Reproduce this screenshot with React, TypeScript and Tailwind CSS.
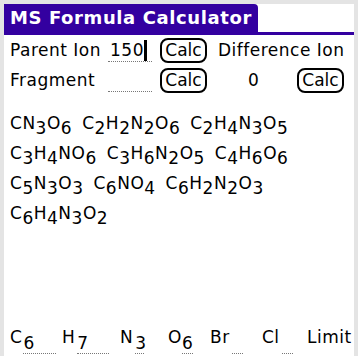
import React from "react";

const F = { fontFamily: '"DejaVu Sans", Verdana, sans-serif' };

function Formula({ parts }: { parts: [string, string?][] }) {
  return (
    <span className="whitespace-nowrap">
      {parts.map(([el, n], i) => (
        <React.Fragment key={i}>
          <span>{el}</span>
          {n ? <span className="relative top-[5px]">{n}</span> : null}
        </React.Fragment>
      ))}
    </span>
  );
}

function Calc() {
  return (
    <div className="h-[25px] w-[47px] rounded-[8px] border-2 border-black flex items-center justify-center text-[17px] leading-none tracking-normal">
      Calc
    </div>
  );
}

export default function App() {
  const lines: [string, string?][][][] = [
    [
      [["C"], ["N", "3"], ["O", "6"]],
      [["C", "2"], ["H", "2"], ["N", "2"], ["O", "6"]],
      [["C", "2"], ["H", "4"], ["N", "3"], ["O", "5"]],
    ],
    [
      [["C", "3"], ["H", "4"], ["N"], ["O", "6"]],
      [["C", "3"], ["H", "6"], ["N", "2"], ["O", "5"]],
      [["C", "4"], ["H", "6"], ["O", "6"]],
    ],
    [
      [["C", "5"], ["N", "3"], ["O", "3"]],
      [["C", "6"], ["N"], ["O", "4"]],
      [["C", "6"], ["H", "2"], ["N", "2"], ["O", "3"]],
    ],
    [[["C", "6"], ["H", "4"], ["N", "3"], ["O", "2"]]],
  ];
  const bottom: { l: string; n?: string; dw: number; w: number; dl: number }[] = [
    { l: "C", n: "6", dw: 33, w: 52, dl: 1 },
    { l: "H", n: "7", dw: 32, w: 58, dl: 2 },
    { l: "N", n: "3", dw: 9, w: 48, dl: 2 },
    { l: "O", n: "6", dw: 11, w: 42, dl: 0 },
    { l: "Br", dw: 11, w: 52, dl: 2 },
    { l: "Cl", dw: 11, w: 45, dl: 2 },
  ];
  return (
    <div className="w-[358px] h-[356px] bg-[#e4e4e4] pl-[4px] pt-[4px] pr-[4px] overflow-hidden" style={F}>
      <div className="w-[350px] h-[352px] bg-white flex flex-col text-black tracking-[0.5px]">
        <div className="flex flex-col">
          <div className="h-[28px] w-[254px] bg-[#3300a0] rounded-tr-[4px] flex items-center pl-[6px]">
            <span className="text-white text-[18px] font-bold leading-none tracking-[0.6px]">
              MS Formula Calculator
            </span>
          </div>
          <div className="h-[3px] w-full bg-[#3300a0]" />
        </div>

        <div className="flex items-center mt-[3px] h-[25px] text-[17px] leading-none">
          <span className="ml-[6px] w-[98px] whitespace-nowrap">Parent Ion</span>
          <span className="w-[44px] h-[22px] border-b border-dotted border-[#777] flex items-center">
            <span className="ml-[2px]">150</span>
            <span className="w-[3px] h-[21px] bg-black" />
          </span>
          <div className="ml-[8px]">
            <Calc />
          </div>
          <span className="ml-[11px] whitespace-nowrap">Difference Ion</span>
        </div>

        <div className="flex items-center mt-[5px] h-[25px] text-[17px] leading-none">
          <span className="ml-[6px] w-[98px]">Fragment</span>
          <span className="w-[44px] h-[22px] border-b border-dotted border-[#777]" />
          <div className="ml-[8px]">
            <Calc />
          </div>
          <span className="ml-[41px] w-[49px]">0</span>
          <Calc />
        </div>

        <div className="mt-[22px] ml-[6px] flex flex-col text-[17px] leading-none gap-[12px]">
          {lines.map((line, i) => (
            <div key={i} className="flex gap-[10px] h-[18px]">
              {line.map((f, j) => (
                <Formula key={j} parts={f} />
              ))}
            </div>
          ))}
        </div>

        <div className="mt-auto mb-[0px] ml-[6px] flex items-end text-[17px] leading-none h-[32px]">
          {bottom.map((b, i) => (
            <div key={i} className="flex items-end shrink-0" style={{ width: b.w }}>
              <span className="mb-[10px]">{b.l}</span>
              <div
                className="border-b border-dotted border-[#777] h-[20px] flex items-end mb-[2px]"
                style={{ width: b.dw, marginLeft: b.dl }}
              >
                {b.n ? <span className="mb-[1px]">{b.n}</span> : null}
              </div>
            </div>
          ))}
          <span className="mb-[10px] shrink-0">Limit</span>
        </div>
      </div>
    </div>
  );
}
